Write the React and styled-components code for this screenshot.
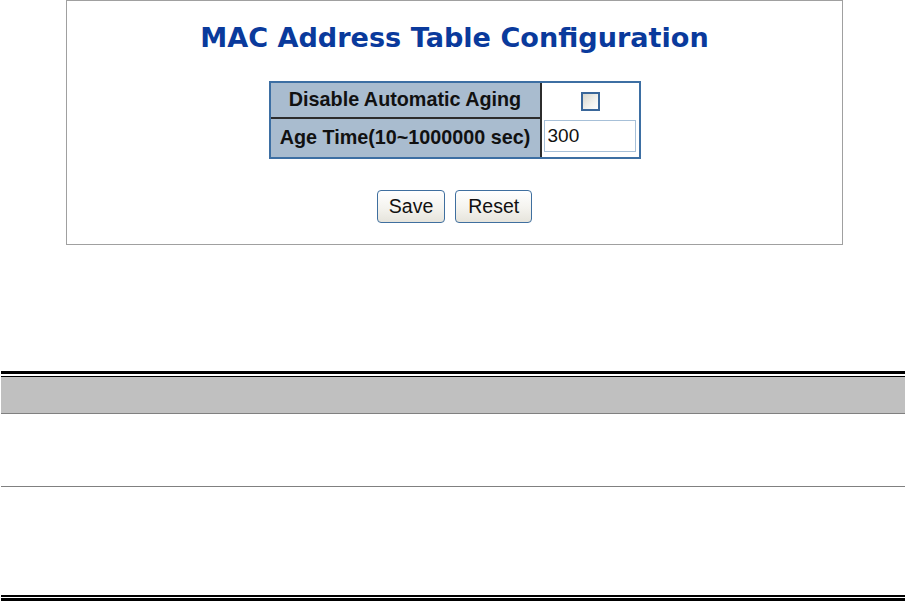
import styled, { createGlobalStyle } from "styled-components";

const GlobalStyle = createGlobalStyle`
  html, body {
    margin: 0;
    padding: 0;
    background: #ffffff;
  }
  body {
    font-family: "Liberation Sans", Arial, sans-serif;
  }
`;

const Page = styled.div`
  width: 906px;
  height: 601px;
  overflow: hidden;
`;

const Panel = styled.div`
  box-sizing: border-box;
  width: 777px;
  height: 245px;
  margin-left: 66px;
  border: 1px solid #a0a0a0;
  display: flex;
  flex-direction: column;
  align-items: center;
`;

const Title = styled.h1`
  margin: 23px 0 0;
  font-family: "DejaVu Sans", Verdana, sans-serif;
  font-weight: bold;
  font-size: 27.1px;
  line-height: 1;
  color: #0a3a9c;
  white-space: nowrap;
`;

const ConfigTable = styled.table`
  margin-top: 30px;
  border-collapse: separate;
  border-spacing: 0;
  border: 2px solid #3d6fa3;
`;

const LabelCell = styled.th`
  box-sizing: border-box;
  width: 271px;
  height: ${(p) => p.$h}px;
  padding: 0 0 1px;
  background: #a9bccf;
  border-right: 2px solid #2c2c2c;
  border-bottom: ${(p) => (p.$last ? "none" : "2px solid #2c2c2c")};
  font-family: "Liberation Sans", Arial, sans-serif;
  font-weight: bold;
  font-size: 19.75px;
  color: #111;
  text-align: center;
  white-space: nowrap;
`;

const ValueCell = styled.td`
  box-sizing: border-box;
  width: 97px;
  padding: ${(p) => p.$pad};
  background: #ffffff;
  text-align: ${(p) => p.$align};
  vertical-align: top;
`;

const CheckBox = styled.input`
  appearance: none;
  box-sizing: border-box;
  display: block;
  width: 19px;
  height: 19px;
  margin: 9px auto 0;
  border: 2px solid #3a679a;
  background: linear-gradient(135deg, #d6d6ce 0%, #f2f2ee 60%, #ffffff 100%);
`;

const TextField = styled.input`
  box-sizing: border-box;
  display: block;
  width: 92px;
  height: 32px;
  margin: 0;
  padding: 0 3px;
  border: 1px solid #a7c0d8;
  font-family: "Liberation Sans", Arial, sans-serif;
  font-size: 19px;
  color: #111;
  outline: none;
`;

const ButtonRow = styled.div`
  display: flex;
  gap: 10px;
  margin-top: 31px;
`;

const Button = styled.button`
  box-sizing: border-box;
  height: 33px;
  padding: 0 ${(p) => p.$px}px;
  border: 1px solid #3f6f9f;
  border-radius: 4px;
  background: linear-gradient(#ffffff 0%, #f4f3ee 55%, #e6e4dc 100%);
  font-family: "Liberation Sans", Arial, sans-serif;
  font-size: 19.5px;
  color: #111;
  cursor: pointer;
`;

const DocTable = styled.div`
  margin: 126px 1px 0;
`;

const DoubleRule = styled.div`
  height: ${(p) => p.$gap}px;
  border-top: ${(p) => p.$top}px solid #000;
  border-bottom: ${(p) => p.$bottom}px solid #000;
`;

const HeadRow = styled.div`
  height: 36px;
  background: #c0c0c0;
  border-bottom: 1px solid #808080;
`;

const BodyRow = styled.div`
  height: ${(p) => p.$h}px;
  border-bottom: ${(p) => (p.$line ? "1px solid #808080" : "none")};
`;

export default function App() {
  return (
    <Page>
      <GlobalStyle />
      <Panel>
        <Title>MAC Address Table Configuration</Title>
        <ConfigTable>
          <tbody>
            <tr>
              <LabelCell $h={36}>Disable Automatic Aging</LabelCell>
              <ValueCell $pad="0" $align="center">
                <CheckBox type="checkbox" />
              </ValueCell>
            </tr>
            <tr>
              <LabelCell $h={38} $last>
                Age Time(10~1000000 sec)
              </LabelCell>
              <ValueCell $pad="1px 3px 4px 2px" $align="left">
                <TextField type="text" defaultValue="300" />
              </ValueCell>
            </tr>
          </tbody>
        </ConfigTable>
        <ButtonRow>
          <Button $px={11}>Save</Button>
          <Button $px={12}>Reset</Button>
        </ButtonRow>
      </Panel>

      <DocTable>
        <DoubleRule $top={3} $gap={2} $bottom={1} />
        <HeadRow />
        <BodyRow $h={72} $line />
        <BodyRow $h={108} />
        <DoubleRule $top={2} $gap={1} $bottom={3} />
      </DocTable>
    </Page>
  );
}
